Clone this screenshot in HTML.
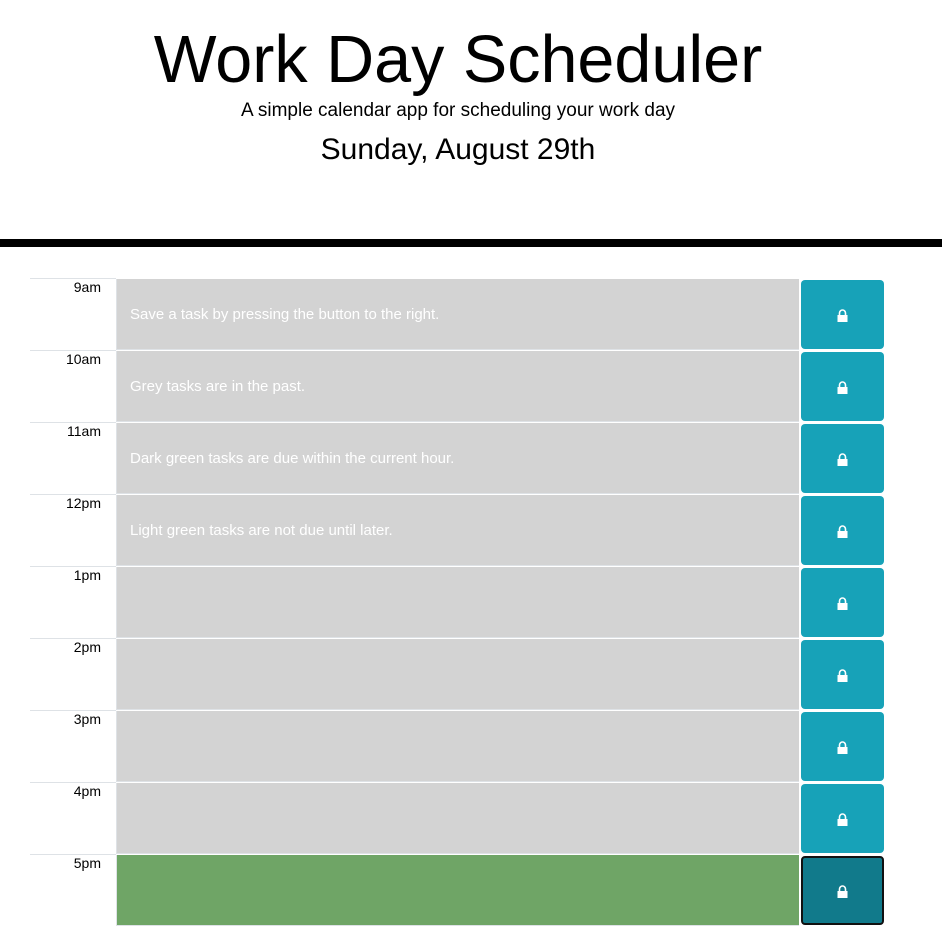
<!DOCTYPE html>
<html><head><style>
body{margin:0;background:#fff;font-family:"Liberation Sans",sans-serif;width:942px;height:926px;overflow:hidden;position:relative}
.h1{position:absolute;left:0;width:916px;text-align:center;top:20px;font-size:66.5px;line-height:80px;color:#000}
.sub{position:absolute;left:0;width:916px;text-align:center;top:100px;font-size:19px;line-height:22px}
.date{position:absolute;left:0;width:916px;text-align:center;top:132px;font-size:30px;line-height:36px}
.bar{position:absolute;left:0;top:239px;width:942px;height:8px;background:#000}
.row{position:absolute;left:30px;width:855px;height:72px}
.row .line{position:absolute;left:0;top:0;width:86px;height:1px;background:#dee2e6}
.hour{position:absolute;left:0;top:1px;width:71px;text-align:right;font-size:14px;color:#000}
.ta{position:absolute;left:86px;top:1px;height:70px;background:#d3d3d3;border:1px solid #dee2e6;border-width:0 0 1px 1px;color:#fff;font-size:15px;line-height:72px;padding-left:13px;width:669px}
.btn{position:absolute;left:771px;top:2px;width:83px;height:69px;background:#17a2b8;border-radius:4px}
.btn svg{position:absolute;left:36px;top:29px}
</style></head><body>
<div class="h1">Work Day Scheduler</div>
<div class="sub">A simple calendar app for scheduling your work day</div>
<div class="date">Sunday, August 29th</div>
<div class="bar"></div>
<div class="row" style="top:278px"><div class="line"></div><div class="hour">9am</div><div class="ta">Save a task by pressing the button to the right.</div><div class="btn"><svg width="11" height="13" viewBox="0 0 11 13"><path d="M2.5 6V4a3 3 0 0 1 6 0v2" fill="none" stroke="#fff" stroke-width="1.6"/><rect x="0.5" y="6" width="10" height="7" fill="#fff"/></svg></div></div>
<div class="row" style="top:350px"><div class="line"></div><div class="hour">10am</div><div class="ta">Grey tasks are in the past.</div><div class="btn"><svg width="11" height="13" viewBox="0 0 11 13"><path d="M2.5 6V4a3 3 0 0 1 6 0v2" fill="none" stroke="#fff" stroke-width="1.6"/><rect x="0.5" y="6" width="10" height="7" fill="#fff"/></svg></div></div>
<div class="row" style="top:422px"><div class="line"></div><div class="hour">11am</div><div class="ta">Dark green tasks are due within the current hour.</div><div class="btn"><svg width="11" height="13" viewBox="0 0 11 13"><path d="M2.5 6V4a3 3 0 0 1 6 0v2" fill="none" stroke="#fff" stroke-width="1.6"/><rect x="0.5" y="6" width="10" height="7" fill="#fff"/></svg></div></div>
<div class="row" style="top:494px"><div class="line"></div><div class="hour">12pm</div><div class="ta">Light green tasks are not due until later.</div><div class="btn"><svg width="11" height="13" viewBox="0 0 11 13"><path d="M2.5 6V4a3 3 0 0 1 6 0v2" fill="none" stroke="#fff" stroke-width="1.6"/><rect x="0.5" y="6" width="10" height="7" fill="#fff"/></svg></div></div>
<div class="row" style="top:566px"><div class="line"></div><div class="hour">1pm</div><div class="ta"></div><div class="btn"><svg width="11" height="13" viewBox="0 0 11 13"><path d="M2.5 6V4a3 3 0 0 1 6 0v2" fill="none" stroke="#fff" stroke-width="1.6"/><rect x="0.5" y="6" width="10" height="7" fill="#fff"/></svg></div></div>
<div class="row" style="top:638px"><div class="line"></div><div class="hour">2pm</div><div class="ta"></div><div class="btn"><svg width="11" height="13" viewBox="0 0 11 13"><path d="M2.5 6V4a3 3 0 0 1 6 0v2" fill="none" stroke="#fff" stroke-width="1.6"/><rect x="0.5" y="6" width="10" height="7" fill="#fff"/></svg></div></div>
<div class="row" style="top:710px"><div class="line"></div><div class="hour">3pm</div><div class="ta"></div><div class="btn"><svg width="11" height="13" viewBox="0 0 11 13"><path d="M2.5 6V4a3 3 0 0 1 6 0v2" fill="none" stroke="#fff" stroke-width="1.6"/><rect x="0.5" y="6" width="10" height="7" fill="#fff"/></svg></div></div>
<div class="row" style="top:782px"><div class="line"></div><div class="hour">4pm</div><div class="ta"></div><div class="btn"><svg width="11" height="13" viewBox="0 0 11 13"><path d="M2.5 6V4a3 3 0 0 1 6 0v2" fill="none" stroke="#fff" stroke-width="1.6"/><rect x="0.5" y="6" width="10" height="7" fill="#fff"/></svg></div></div>
<div class="row" style="top:854px"><div class="line"></div><div class="hour">5pm</div><div class="ta" style="background:#6fa566"></div><div class="btn" style="background:#117a8b;border:2px solid #111;box-sizing:border-box"><svg width="11" height="13" viewBox="0 0 11 13" style="left:34px;top:27px"><path d="M2.5 6V4a3 3 0 0 1 6 0v2" fill="none" stroke="#fff" stroke-width="1.6"/><rect x="0.5" y="6" width="10" height="7" fill="#fff"/></svg></div></div>
</body></html>
